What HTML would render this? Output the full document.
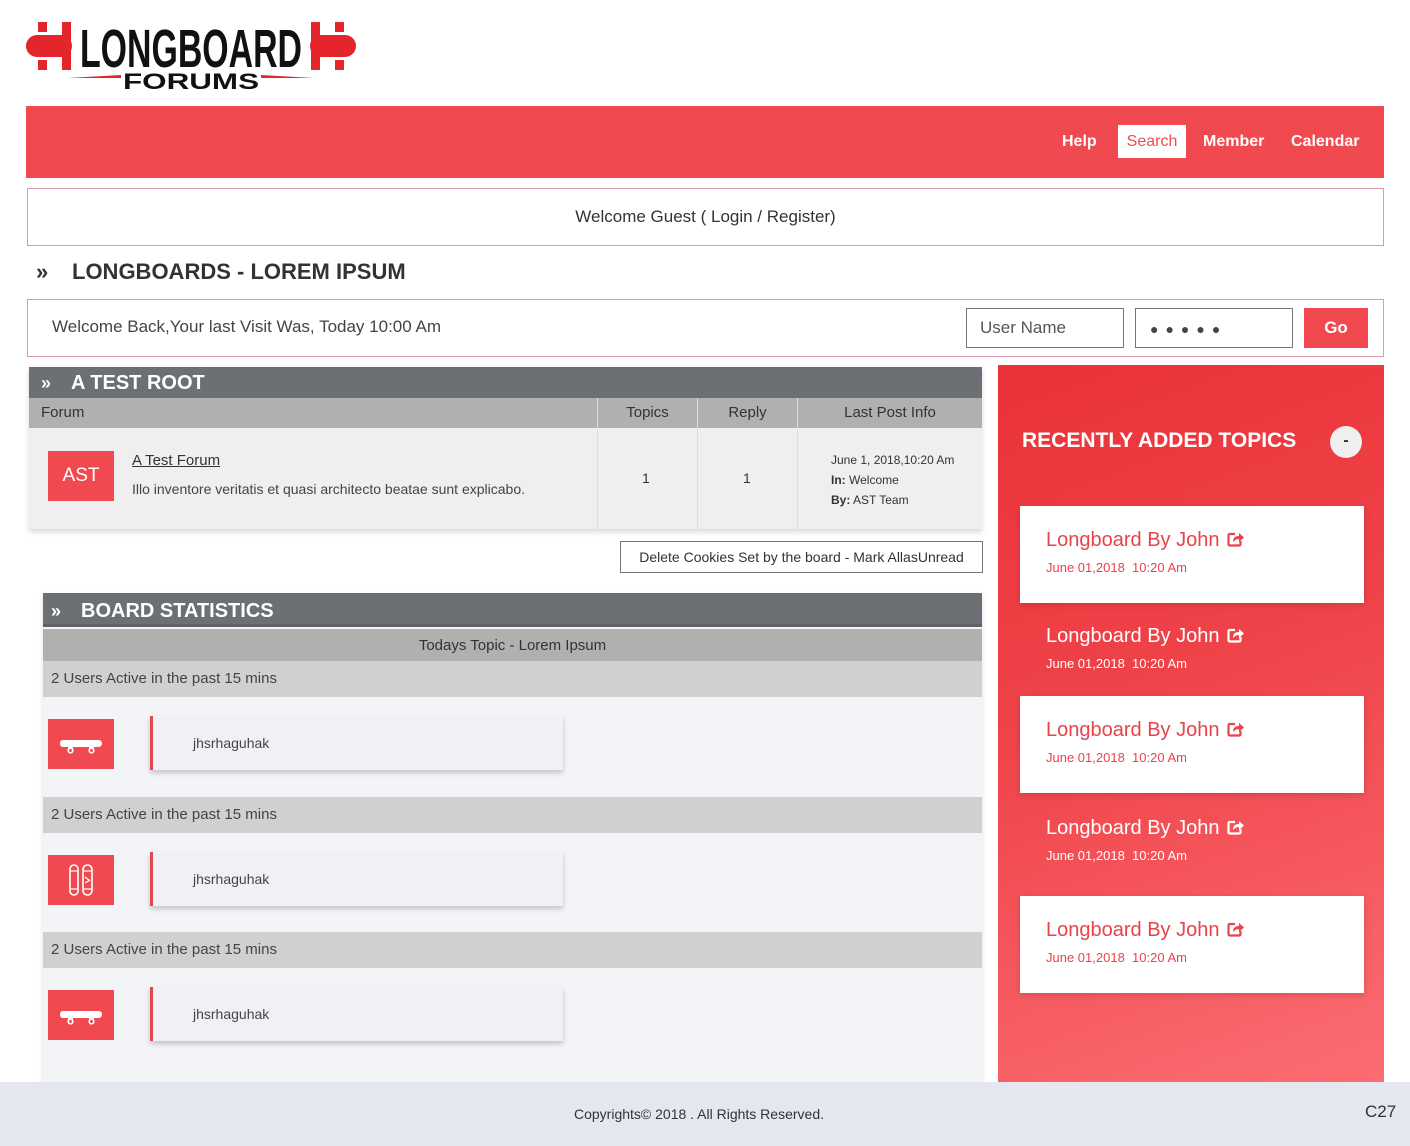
<!DOCTYPE html>
<html><head><meta charset="utf-8">
<style>
*{margin:0;padding:0;box-sizing:border-box}
body{width:1410px;height:1146px;background:#fff;font-family:"Liberation Sans","DejaVu Sans",sans-serif;color:#333;position:relative;overflow:hidden}
.a{position:absolute}
.nav{left:26px;top:106px;width:1358px;height:72px;background:#f04a50}
.nav span{position:absolute;top:19px;height:33px;line-height:33px;color:#fff;font-size:16px;font-weight:bold}
.box{border:1px solid #d79ab6;background:#fff}
.gh{background:#6c6f73;color:#fff;font-weight:bold}
.ch{background:#b0b0b0;font-size:15px;color:#333}
.sq{background:#f04a50;color:#fff}
.gray{background:#d0d0d0;font-size:15px;color:#444;padding-left:8px;line-height:36px}
.user{background:#f0f1f6;border-left:3px solid #e0474e;box-shadow:0 3px 5px rgba(0,0,0,.2);font-size:14px;color:#444;padding-left:40px;line-height:54px}
.card{left:1020px;width:344px;height:97px;background:#fff;box-shadow:0 2px 6px rgba(0,0,0,.15)}
.t{position:absolute;left:26px;font-size:20px;color:#e8434b;white-space:nowrap}
.t svg{vertical-align:-1px;margin-left:8px}
.d{position:absolute;left:26px;font-size:13px;color:#e8434b}
.w .t,.w .d{color:#fff}
</style></head><body>

<svg width="0" height="0" style="position:absolute"><defs>
<symbol id="sh" viewBox="0 0 18 16"><path d="M8 3 H3 Q1.5 3 1.5 4.5 V13 Q1.5 14.5 3 14.5 H12 Q13.5 14.5 13.5 13 V10" fill="none" stroke="currentColor" stroke-width="2.2"/><path d="M6 11 Q6 5 12 5 V2 L17 6.5 L12 11 V8 Q8.5 8 6 11Z" fill="currentColor"/></symbol>
<symbol id="sk" viewBox="0 0 66 50"><path d="M15 21 H50 Q54 21 54 24.5 Q54 28 50 28 H15 Q12 28 12 24.5 Q12 21 15 21Z" fill="#fff"/><rect x="20" y="27" width="5" height="3" fill="#fff"/><rect x="41" y="27" width="5" height="3" fill="#fff"/><circle cx="22.5" cy="31.5" r="2.3" fill="none" stroke="#fff" stroke-width="1.6"/><circle cx="43.5" cy="31.5" r="2.3" fill="none" stroke="#fff" stroke-width="1.6"/></symbol>
</defs></svg>

<!-- logo -->
<svg class="a" style="left:26px;top:20px" width="330" height="72" viewBox="0 0 330 72">
<g fill="#e4252b">
<rect x="0" y="15" width="46" height="22" rx="11"/>
<rect x="12" y="2" width="9" height="10"/><rect x="12" y="40" width="9" height="10"/>
<rect x="36" y="2" width="9" height="48"/>
<rect x="284" y="15" width="46" height="22" rx="11"/>
<rect x="309" y="2" width="9" height="10"/><rect x="309" y="40" width="9" height="10"/>
<rect x="285" y="2" width="9" height="48"/>
<path d="M42 58 L95 55 L95 58 Z"/><path d="M288 58 L235 55 L235 58 Z"/>
</g>
<text x="165" y="47" text-anchor="middle" font-family="Liberation Sans" font-weight="bold" font-size="54" textLength="222" lengthAdjust="spacingAndGlyphs" fill="#111">LONGBOARD</text>
<text x="165" y="69" text-anchor="middle" font-family="Liberation Sans" font-weight="bold" font-size="22" textLength="136" lengthAdjust="spacingAndGlyphs" fill="#111">FORUMS</text>
</svg>

<div class="a nav">
<span style="left:1036px">Help</span>
<span style="left:1092px;width:68px;background:#fff;color:#f04a50;text-align:center;font-weight:normal">Search</span>
<span style="left:1177px">Member</span>
<span style="left:1265px">Calendar</span>
</div>

<div class="a box" style="left:27px;top:188px;width:1357px;height:58px;text-align:center;line-height:56px;font-size:17px">Welcome Guest ( Login / Register)</div>

<div class="a" style="left:36px;top:259px;font-size:22px;font-weight:bold;color:#333">»</div>
<div class="a" style="left:72px;top:259px;font-size:22px;font-weight:bold;color:#333">LONGBOARDS - LOREM IPSUM</div>

<div class="a box" style="left:27px;top:299px;width:1357px;height:58px"></div>
<div class="a" style="left:52px;top:317px;font-size:17px;color:#444">Welcome Back,Your last Visit Was, Today 10:00 Am</div>
<div class="a" style="left:966px;top:308px;width:158px;height:40px;border:1px solid #777;font-size:17px;color:#555;padding-left:13px;line-height:38px">User Name</div>
<div class="a" style="left:1135px;top:308px;width:158px;height:40px;border:1px solid #777;font-size:14px;color:#444;padding-left:14px;line-height:40px;letter-spacing:7px">●●●●●</div>
<div class="a sq" style="left:1304px;top:308px;width:64px;height:40px;text-align:center;line-height:40px;font-weight:bold;font-size:17px">Go</div>

<!-- test root -->
<div class="a" style="left:29px;top:367px;width:953px;height:162px;box-shadow:0 3px 5px rgba(0,0,0,.15);background:#efefef"></div>
<div class="a gh" style="left:29px;top:367px;width:953px;height:31px;font-size:20px;line-height:32px"><span style="margin-left:12px;font-size:18px">»</span><span style="margin-left:20px">A TEST ROOT</span></div>
<div class="a ch" style="left:29px;top:398px;width:953px;height:30px;line-height:30px"><span style="margin-left:12px">Forum</span></div>
<div class="a ch" style="left:597px;top:398px;width:100px;height:30px;line-height:30px;text-align:center;border-left:1px solid #ddd">Topics</div>
<div class="a ch" style="left:697px;top:398px;width:100px;height:30px;line-height:30px;text-align:center;border-left:1px solid #ddd">Reply</div>
<div class="a ch" style="left:797px;top:398px;width:185px;height:30px;line-height:30px;text-align:center;border-left:1px solid #ddd">Last Post Info</div>
<div class="a" style="left:597px;top:428px;width:1px;height:101px;background:#ddd"></div>
<div class="a" style="left:697px;top:428px;width:1px;height:101px;background:#ddd"></div>
<div class="a" style="left:797px;top:428px;width:1px;height:101px;background:#ddd"></div>
<div class="a sq" style="left:48px;top:451px;width:66px;height:50px;line-height:50px;text-align:center;font-size:19px">AST</div>
<div class="a" style="left:132px;top:452px;font-size:15px;text-decoration:underline;color:#333">A Test Forum</div>
<div class="a" style="left:132px;top:481px;font-size:14px;color:#444">Illo inventore veritatis et quasi architecto beatae sunt explicabo.</div>
<div class="a" style="left:642px;top:470px;font-size:14px">1</div>
<div class="a" style="left:743px;top:470px;font-size:14px">1</div>
<div class="a" style="left:831px;top:450px;font-size:12px;line-height:20px;color:#333">June 1, 2018,10:20 Am<br><b>In:</b> Welcome<br><b>By:</b> AST Team</div>

<div class="a" style="left:620px;top:541px;width:363px;height:32px;border:1px solid #777;font-size:14px;line-height:30px;text-align:center;color:#333">Delete Cookies Set by the board - Mark AllasUnread</div>

<!-- board stats -->
<div class="a" style="left:43px;top:593px;width:939px;height:489px;background:#f3f4f8;box-shadow:0 2px 5px rgba(0,0,0,.12)"></div>
<div class="a gh" style="left:43px;top:593px;width:939px;height:34px;font-size:20px;line-height:36px;border-bottom:3px solid #5e6165"><span style="margin-left:8px;font-size:18px">»</span><span style="margin-left:20px">BOARD STATISTICS</span></div>
<div class="a ch" style="left:43px;top:629px;width:939px;height:32px;line-height:34px;text-align:center">Todays Topic - Lorem Ipsum</div>
<div class="a gray" style="left:43px;top:661px;width:939px;height:36px">2 Users Active in the past 15 mins</div>
<div class="a gray" style="left:43px;top:797px;width:939px;height:36px">2 Users Active in the past 15 mins</div>
<div class="a gray" style="left:43px;top:932px;width:939px;height:36px">2 Users Active in the past 15 mins</div>

<div class="a sq" style="left:48px;top:719px;width:66px;height:50px"><svg width="66" height="50"><use href="#sk"/></svg></div>
<div class="a sq" style="left:48px;top:855px;width:66px;height:50px"><svg width="66" height="50"><rect x="22" y="10" width="8" height="30" rx="4" fill="none" stroke="#fff" stroke-width="1.6"/><rect x="35" y="10" width="9" height="30" rx="4.5" fill="none" stroke="#fff" stroke-width="1.6"/><path d="M22 16h8M22 34h8M35 16h9M35 34h9M37 22l5 4M37 28l5-3" stroke="#fff" stroke-width="1.3"/></svg></div>
<div class="a sq" style="left:48px;top:990px;width:66px;height:50px"><svg width="66" height="50"><use href="#sk"/></svg></div>

<div class="a user" style="left:150px;top:716px;width:413px;height:54px">jhsrhaguhak</div>
<div class="a user" style="left:150px;top:852px;width:413px;height:54px">jhsrhaguhak</div>
<div class="a user" style="left:150px;top:987px;width:413px;height:54px">jhsrhaguhak</div>

<!-- right panel -->
<div class="a" style="left:998px;top:365px;width:386px;height:717px;background:linear-gradient(160deg,#ea3238 0%,#ef444a 45%,#fb6d72 100%)"></div>
<div class="a" style="left:1022px;top:429px;font-size:21px;font-weight:bold;color:#fff">RECENTLY ADDED TOPICS</div>
<div class="a" style="left:1330px;top:426px;width:32px;height:32px;border-radius:50%;background:#efefef;text-align:center;line-height:30px;font-weight:bold;font-size:16px;color:#333">-</div>

<div class="a card" style="top:506px"><div class="t" style="top:23px">Longboard By John<svg width="18" height="16"><use href="#sh"/></svg></div><div class="d" style="top:54px">June 01,2018 &nbsp;10:20 Am</div></div>
<div class="a card w" style="top:602px;background:none;box-shadow:none"><div class="t" style="top:23px">Longboard By John<svg width="18" height="16"><use href="#sh"/></svg></div><div class="d" style="top:54px">June 01,2018 &nbsp;10:20 Am</div></div>
<div class="a card" style="top:696px"><div class="t" style="top:23px">Longboard By John<svg width="18" height="16"><use href="#sh"/></svg></div><div class="d" style="top:54px">June 01,2018 &nbsp;10:20 Am</div></div>
<div class="a card w" style="top:794px;background:none;box-shadow:none"><div class="t" style="top:23px">Longboard By John<svg width="18" height="16"><use href="#sh"/></svg></div><div class="d" style="top:54px">June 01,2018 &nbsp;10:20 Am</div></div>
<div class="a card" style="top:896px"><div class="t" style="top:23px">Longboard By John<svg width="18" height="16"><use href="#sh"/></svg></div><div class="d" style="top:54px">June 01,2018 &nbsp;10:20 Am</div></div>

<!-- footer -->
<div class="a" style="left:0;top:1082px;width:1410px;height:64px;background:#e4e6f0"></div>
<div class="a" style="left:0;top:1106px;width:1398px;text-align:center;font-size:14px;color:#333">Copyrights© 2018 . All Rights Reserved.</div>
<div class="a" style="left:1365px;top:1102px;font-size:17px;color:#333">C27</div>
</body></html>
